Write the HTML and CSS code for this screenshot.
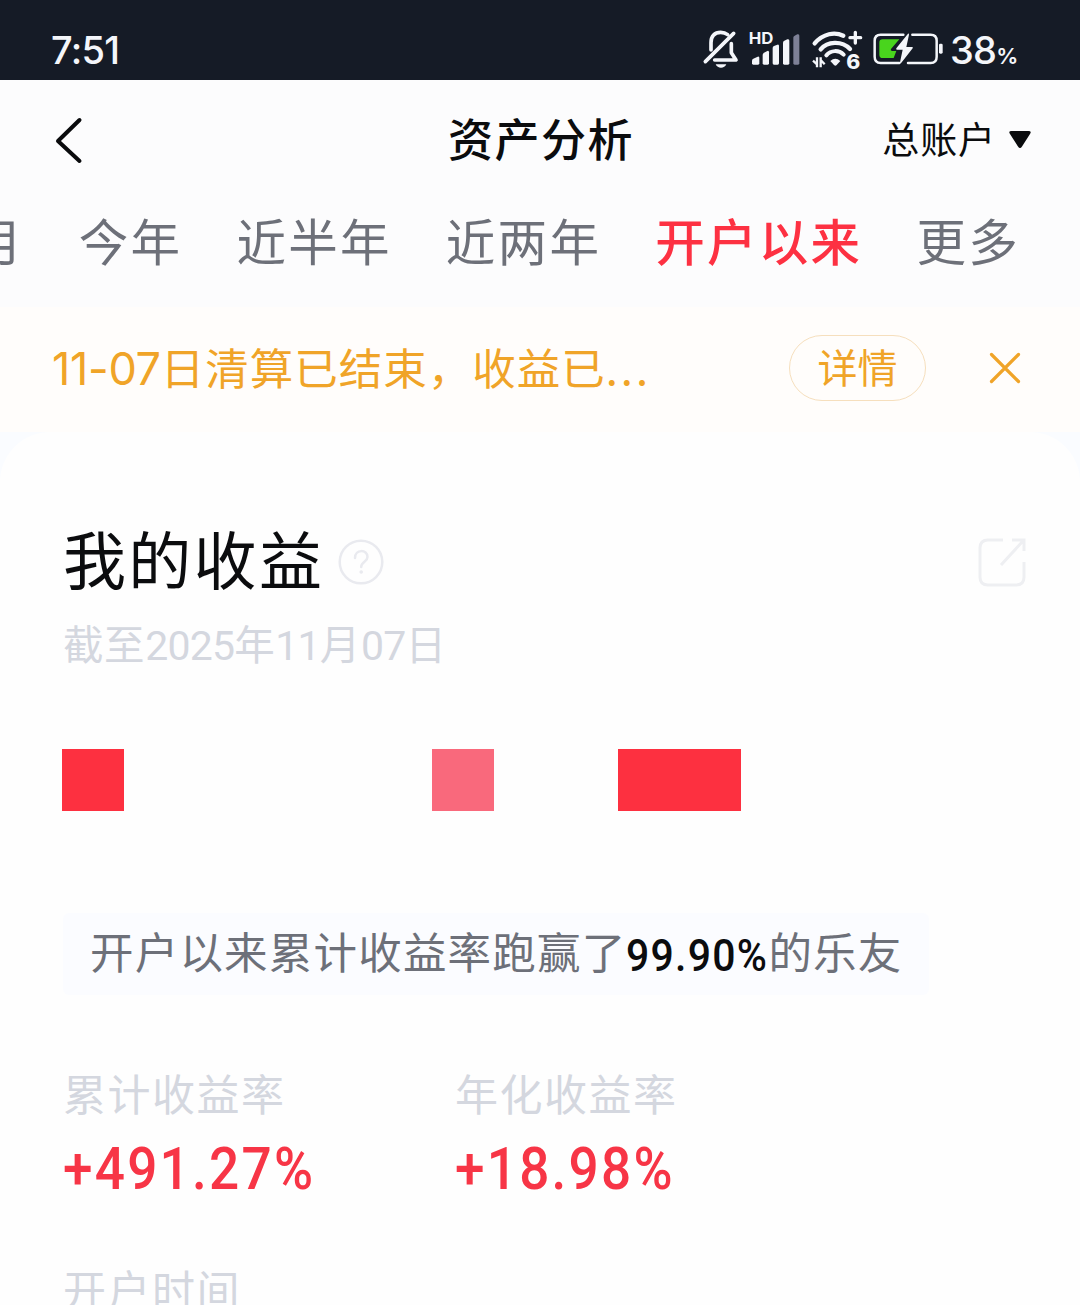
FILE: index.html
```html
<!DOCTYPE html>
<html lang="zh-CN">
<head>
<meta charset="utf-8">
<title>资产分析</title>
<link rel="stylesheet" href="styles.css">
</head>
<body>
<div class="screen">
  <header class="status">
    <span class="clock">7:51</span>
    <div class="indicators">
      <svg class="bell" width="36" height="40" viewBox="40 43 108 120" fill="none" stroke="#f4f6fa" stroke-width="11" stroke-linecap="round" stroke-linejoin="round">
        <path d="M64 106V84C64 64 75 53 93 53C102 53 109 56 114 60"/>
        <path d="M132 56L47 141"/>
        <path d="M125 87V114L139 136H75"/>
        <path d="M78 149H110C105 163 83 163 78 149Z" fill="#f4f6fa" stroke="none"/>
      </svg>
      <svg class="signal" width="51" height="40" viewBox="178 43 153 120">
        <text class="hd" x="177" y="89" textLength="74" lengthAdjust="spacingAndGlyphs">HD</text>
        <g fill="#f4f6fa">
          <path d="M187 138Q187 134 191 132L204 126Q209 124 209 130V146Q209 150 205 150H191Q187 150 187 146Z"/>
          <path d="M219 121Q219 117 223 114L233 109Q238 107 238 113V146Q238 150 234 150H223Q219 150 219 146Z"/>
          <path d="M249 100Q249 96 253 94L263 90Q268 88 268 94V146Q268 150 264 150H253Q249 150 249 146Z"/>
          <path d="M280 84Q280 80 284 78L293 74Q299 72 299 78V146Q299 150 295 150H284Q280 150 280 146Z"/>
        </g>
        <path fill="#7d8096" d="M311 69Q311 65 315 63L323 59Q329 57 329 63V146Q329 150 325 150H315Q311 150 311 146Z"/>
      </svg>
      <svg class="wifi" width="51" height="42" viewBox="367 43 153 126" fill="none" stroke="#f4f6fa" stroke-linecap="round">
        <path stroke-width="13" d="M375 86C401 56 435 51 461 63"/>
        <path stroke-width="13" d="M393 104C413 80 456 77 481 103"/>
        <path stroke-width="12" d="M410 122C424 106 447 105 462 120"/>
        <path fill="#f4f6fa" stroke="none" d="M422 139Q437 126 452 139L441 151Q437 155 433 151Z"/>
        <path stroke-width="10" d="M497 53V85M481 69H513"/>
        <path stroke-width="7" stroke-linecap="butt" d="M370 138L382 149M382 128V158M393 128V158M393 136L405 149"/>
        <text class="six" x="470" y="164" textLength="42" lengthAdjust="spacingAndGlyphs">6</text>
      </svg>
      <svg class="battery" width="71" height="36" viewBox="550 49 213 108">
        <path fill="none" stroke="#f4f6fa" stroke-width="7.500" stroke-linecap="round" d="M641 60H573Q555 60 555 78V126Q555 145 573 145H629M668 60H723Q741 60 741 78V126Q741 145 723 145H655"/>
        <rect x="748" y="87" width="11" height="30" rx="4" fill="#f4f6fa"/>
        <path fill="#49d51d" d="M579 74H629L604 103Q601 108 607 109H620L612 130H579Q569 130 569 120V84Q569 74 579 74Z"/>
        <path fill="#f4f6fa" d="M655 57L620 101Q618 105 622 105H639L631 143Q631 148 635 144L669 101Q671 97 667 97H650L658 60Q658 55 655 57Z"/>
      </svg>
      <span class="charge">38<small>%</small></span>
    </div>
  </header>

  <nav class="nav">
    <svg class="back" width="30" height="48" viewBox="0 0 30 48" fill="none" stroke="#0a0b0d" stroke-width="4" stroke-linecap="round" stroke-linejoin="round"><path d="M25.500 4L4 25L25.500 45"/></svg>
    <h1 class="title">资产分析</h1>
    <div class="account"><span>总账户</span>
      <svg width="24" height="20" viewBox="0 0 24 20" fill="#0a0b0d"><path d="M3.500 1H20.500Q24 1 22 4L14 16.500Q12 19.500 10 16.500L2 4Q0 1 3.500 1Z"/></svg>
    </div>
  </nav>

  <div class="tabs">
    <span class="tab">近一月</span><span class="tab">今年</span><span class="tab">近半年</span><span class="tab">近两年</span><span class="tab active">开户以来</span><span class="tab">更多</span>
  </div>

  <div class="notice">
    <p class="message"><span class="num">11-07</span>日清算已结束，收益已<span class="dots">...</span></p>
    <a class="detail">详情</a>
    <svg class="close" width="32" height="32" viewBox="0 0 32 32" fill="none" stroke="#f0a428" stroke-width="3.200" stroke-linecap="round"><path d="M2.500 2.500L29.500 29.500M29.500 2.500L2.500 29.500"/></svg>
  </div>

  <main class="backdrop"><section class="card">
    <div class="heading">
      <h2>我的收益</h2>
      <svg class="help" width="48" height="48" viewBox="0 0 48 48" fill="none" stroke="#e9eaef" stroke-width="2.500" stroke-linecap="round"><circle cx="24" cy="24" r="21.300"/><path d="M18 20C18 11 30.500 11 30.500 19C30.500 24 24.200 23.500 24.200 29"/><circle cx="24.200" cy="34" r="1.200" fill="#e9eaef" stroke-width="1.200"/></svg>
      <svg class="share" width="50" height="50" viewBox="0 0 50 50" fill="none" stroke="#eeeff2" stroke-width="3" stroke-linecap="butt"><path d="M26 3H11Q3 3 3 11V40Q3 48 11 48H39Q47 48 47 40V25M35 3H47V14M46 4L24 28"/></svg>
    </div>
    <p class="date">截至<span class="num">2025</span>年<span class="num">11</span>月<span class="num">07</span>日</p>
    <div class="mosaic"><i class="block"></i><i class="block pale"></i><i class="block wide"></i></div>
    <p class="rank">开户以来累计收益率跑赢了<b>99.90%</b>的乐友</p>
    <div class="stats">
      <div class="stat"><span class="label">累计收益率</span><span class="value">+491.27%</span></div>
      <div class="stat"><span class="label">年化收益率</span><span class="value">+18.98%</span></div>
      <div class="stat"><span class="label">开户时间</span></div>
    </div>
  </section></main>
</div>
</body>
</html>
```

FILE: styles.css
```css
* { box-sizing: border-box; margin: 0; padding: 0; }
body { width: 1080px; height: 1305px; overflow: hidden; background: #fcfcfd; font-family: "Noto Sans CJK SC", sans-serif; color: #0b0c0e; }
.screen { width: 1080px; height: 1305px; overflow: hidden; display: flex; flex-direction: column; white-space: nowrap; }
.screen > * { flex: none; }
svg { display: block; flex: none; overflow: visible; }

.status { height: 80px; padding: 0 64px 0 51px; display: flex; justify-content: space-between; background: #151b26; color: #f4f6fa; font-family: Inter, sans-serif; }
.clock { font-size: 38px; line-height: 100px; font-weight: 500; letter-spacing: -.7px; }
.indicators { display: flex; padding-top: 29px; }
.signal { margin-left: 10px; }
.wifi { margin-left: 12px; }
.battery { margin: 2px 0 0 10px; }
.hd { font: 700 47px Inter, sans-serif; fill: #f4f6fa; }
.six { font: 800 60px Inter, sans-serif; fill: #f4f6fa; stroke: none; }
.charge { width: 66px; margin: -29px 0 0 6px; font-size: 38px; line-height: 100px; font-weight: 500; letter-spacing: -.8px; }
.charge small { font-size: 22px; font-weight: 600; }

.nav { height: 116px; padding: 0 48px 0 54px; display: grid; grid-template-columns: 1fr auto 1fr; align-items: center; }
.back { margin-top: 3px; }
.title { font-size: 45px; line-height: 116px; font-weight: 500; letter-spacing: 1.5px; margin: 0 4px 0 0; }
.account { display: flex; justify-content: flex-end; align-items: center; gap: 12px; font-size: 37px; line-height: 116px; letter-spacing: .9px; }
.account svg { margin-top: 4px; }

.tabs { height: 111px; display: flex; justify-content: flex-end; gap: 54px; padding-right: 60px; font-size: 49.500px; line-height: 88px; letter-spacing: 2.300px; color: #6d7079; }
.tab.active { color: #fd3142; font-weight: 500; }

.notice { height: 125px; padding: 0 59px 4px 52px; display: flex; align-items: center; background: #fffdfb; color: #f0a428; }
.message { width: 737px; font-size: 43.500px; line-height: 120px; letter-spacing: 1px; }
.message .num { font-family: Inter, sans-serif; font-size: 45px; letter-spacing: -.3px; }
.dots { letter-spacing: 3px; }
.detail { width: 137px; height: 66px; margin-right: 63px; border: 1.500px solid #f6dfbd; border-radius: 33px; text-align: center; font-size: 40px; line-height: 60px; }

.backdrop { height: 873px; background: #fafcff; }
.card { height: 873px; padding: 0 53px 0 63px; background: #fefefe; border-radius: 50px 50px 0 0; }
.heading { padding-top: 80px; display: flex; align-items: center; }
.heading h2 { margin-top: -2px; font-size: 63px; line-height: 94px; font-weight: 400; letter-spacing: 2.300px; }
.help { margin: 8px 0 0 13px; }
.share { margin: 8px 0 0 auto; }
.date { height: 76px; font-size: 40.500px; line-height: 78px; letter-spacing: .6px; color: #d4d7df; }
.date .num { font-family: Roboto, sans-serif; font-size: 41px; letter-spacing: -.8px; }
.mosaic { margin: 69px 0 0 -1px; display: flex; height: 62px; }
.block { width: 62px; background: #fd3040; }
.block.pale { margin-left: 308px; background: #f9697c; }
.block.wide { width: 123px; margin-left: 124px; }
.rank { width: 866px; height: 82px; margin-top: 102px; padding-left: 27px; border-radius: 6px; background: #fbfcff; font-size: 43.500px; line-height: 76px; letter-spacing: 1.200px; color: #6d7079; }
.rank b { display: inline-block; width: 142px; height: 45px; line-height: 45px; vertical-align: baseline; font-family: Roboto, sans-serif; font-size: 45px; font-weight: 500; color: #0b0c0e; letter-spacing: 1.400px; transform: translateY(2px) scaleX(.91); transform-origin: 0 50%; }
.stats { margin-top: 68px; display: grid; grid-template-columns: 392px 392px; row-gap: 53px; }
.stat { display: flex; flex-direction: column; }
.label { font-size: 43px; line-height: 58px; letter-spacing: 1.500px; color: #d4d7df; }
.value { margin-top: 11px; font-family: Roboto, sans-serif; font-size: 59px; line-height: 74px; letter-spacing: 2.500px; font-weight: 500; color: #f73546; transform: scaleX(.9); transform-origin: 0 50%; }
```
